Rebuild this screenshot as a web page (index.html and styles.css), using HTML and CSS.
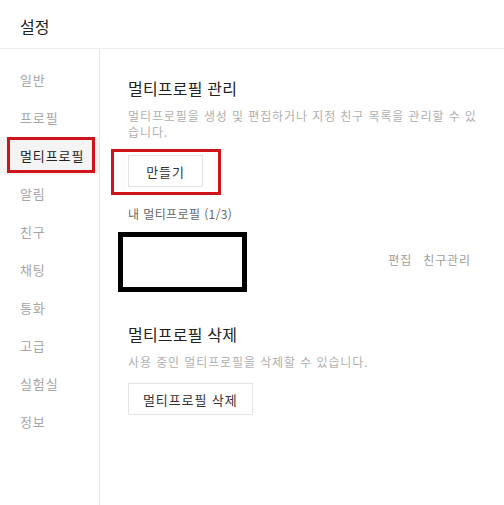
FILE: index.html
```html
<!DOCTYPE html>
<html lang="ko">
<head>
<meta charset="utf-8">
<link rel="stylesheet" href="styles.css">
</head>
<body>
<header class="top">설정</header>
<div class="wrap">
  <nav class="side">
    <div class="item">일반</div>
    <div class="item">프로필</div>
    <div class="item active">멀티프로필</div>
    <div class="item">알림</div>
    <div class="item">친구</div>
    <div class="item">채팅</div>
    <div class="item">통화</div>
    <div class="item">고급</div>
    <div class="item">실험실</div>
    <div class="item">정보</div>
  </nav>
  <main class="main">
    <h2 class="title">멀티프로필 관리</h2>
    <p class="desc">멀티프로필을 생성 및 편집하거나 지정 친구 목록을 관리할 수 있습니다.</p>
    <button class="btn marked">만들기</button>
    <div class="label">내 멀티프로필 (1/3)</div>
    <div class="row">
      <div class="redact"></div>
      <div class="links"><span>편집</span><span>친구관리</span></div>
    </div>
    <h2 class="title second">멀티프로필 삭제</h2>
    <p class="desc">사용 중인 멀티프로필을 삭제할 수 있습니다.</p>
    <button class="btn">멀티프로필 삭제</button>
  </main>
</div>
</body>
</html>
```
FILE: styles.css
```css
* { box-sizing: border-box; }
html, body { margin: 0; padding: 0; background: #fff; }
body {
  font-family: "Noto Sans CJK KR", "Noto Sans", sans-serif;
  color: #222;
  height: 505px;
  overflow: hidden;
}
.top {
  height: 49px;
  padding: 14px 0 0 20px;
  font-size: 16px;
  line-height: 24px;
  border-bottom: 1px solid #ececec;
}
.wrap {
  display: flex;
  height: 456px;
}
.side {
  width: 100px;
  border-right: 1px solid #e6e6e6;
  padding-top: 12px;
  flex-shrink: 0;
}
.item {
  height: 38px;
  line-height: 38px;
  padding-left: 20px;
  font-size: 13px;
  letter-spacing: 0.9px;
  color: #a6a6a6;
  position: relative;
}
.item.active {
  color: #222;
  background: #f4f4f4;
}
.item.active::after {
  content: "";
  position: absolute;
  left: 7px;
  right: 4px;
  top: 0;
  bottom: 2px;
  border: 3px solid #d0131a;
}
.main {
  flex: 1;
  padding: 27px 22px 0 28px;
}
.title {
  margin: 0;
  font-size: 16px;
  font-weight: 400;
  line-height: 24px;
  letter-spacing: 0.2px;
  color: #222;
}
.title.second { margin-top: 30px; }
.desc {
  margin: 8px 0 0;
  font-size: 12px;
  line-height: 16px;
  letter-spacing: 0.9px;
  color: #b0b0b0;
}
.btn {
  display: block;
  margin-top: 13px;
  height: 32px;
  padding: 0 14px;
  font-family: inherit;
  font-size: 13px;
  letter-spacing: 0.9px;
  color: #333;
  background: #fff;
  border: 1px solid #e3e3e3;
  border-radius: 0;
}
.btn.marked {
  position: relative;
  width: 75px;
  padding: 0;
  margin-top: 15px;
}
.btn.marked::after {
  content: "";
  position: absolute;
  left: -18px;
  right: -19px;
  top: -7px;
  bottom: -9px;
  border: 3px solid #d0131a;
}
.label {
  margin-top: 19px;
  font-size: 12px;
  line-height: 16px;
  letter-spacing: 0.4px;
  color: #666;
}
.row {
  display: flex;
  align-items: center;
  justify-content: space-between;
  margin-top: 10px;
}
.redact {
  width: 129px;
  height: 60px;
  margin-left: -10px;
  border: 5px solid #000;
}
.links {
  display: flex;
  gap: 11px;
  margin-right: 11px;
  font-size: 12px;
  letter-spacing: 0.9px;
  color: #a0a0a0;
  margin-top: -6px;
}
```
